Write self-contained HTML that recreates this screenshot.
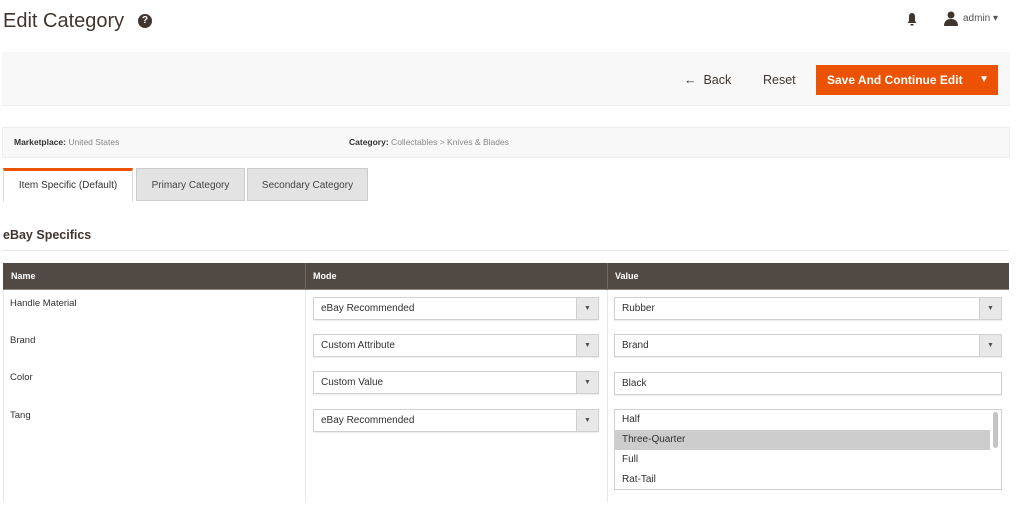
<!DOCTYPE html>
<html><head><meta charset="utf-8"><style>
*{box-sizing:border-box;margin:0;padding:0}
body{width:1024px;height:514px;overflow:hidden;background:#fff;font-family:"Liberation Sans",sans-serif;color:#303030;position:relative}
.a{position:absolute}
.sel{position:absolute;height:23px;border:1px solid #d0d0d0;background:#fff;font-size:10px;line-height:21px;padding-left:7px;color:#303030;box-shadow:0 1px 1px rgba(0,0,0,.08)}
.sel .ar{position:absolute;right:0;top:0;width:22px;height:21px;background:#e8e8e8;border-left:1px solid #d0d0d0;text-align:center;font-size:7px;color:#555}
.vl{position:absolute;top:290px;width:1px;height:212px;background:#e8e8e8}
.th{position:absolute;top:263px;height:27px;line-height:27px;color:#fff;font-weight:bold;font-size:9px;padding-left:8px}
.nm{position:absolute;left:10px;font-size:9.5px;color:#303030}
</style></head><body>
<div class="a" style="left:3px;top:10px;font-size:20px;color:#41362f">Edit Category</div>
<div class="a" style="left:138px;top:14px;width:14px;height:14px;border-radius:50%;background:#41362f;color:#fff;font-size:10px;font-weight:bold;text-align:center;line-height:14px">?</div>
<svg class="a" style="left:906px;top:12px" width="12" height="14" viewBox="0 0 12 14"><path d="M6 1C3.5 1 3 3 3 5v4L1.5 11h9L9 9V5C9 3 8.5 1 6 1z M4.5 12h3v1.5h-3z" fill="#41362f"/></svg>
<svg class="a" style="left:943px;top:11px" width="16" height="15" viewBox="0 0 16 15"><circle cx="8" cy="4" r="3.5" fill="#41362f"/><path d="M1 15c0-5 3-7 7-7s7 2 7 7z" fill="#41362f"/></svg>
<div class="a" style="left:963px;top:13px;font-size:10px;color:#555">admin &#9662;</div>

<div class="a" style="left:2px;top:52px;width:1008px;height:54px;background:#f8f8f8;border-bottom:1px solid #eee"></div>
<div class="a" style="left:684px;top:73px;font-size:12.5px;color:#41362f">&#8592;&nbsp; Back</div>
<div class="a" style="left:763px;top:73px;font-size:12.5px;color:#41362f">Reset</div>
<div class="a" style="left:816px;top:65px;width:182px;height:30px;background:#eb5202;color:#fff;font-weight:bold;font-size:12px;line-height:30px;padding-left:11px">Save And Continue Edit<span style="position:absolute;right:9px;font-size:10px">&#9660;</span></div>

<div class="a" style="left:2px;top:127px;width:1008px;height:31px;background:#f8f8f8;border:1px solid #eee;font-size:8.5px;line-height:29px;color:#888"><span style="position:absolute;left:11px"><b style="color:#333">Marketplace:</b> United States</span><span style="position:absolute;left:346px"><b style="color:#333">Category:</b> Collectables &gt; Knives &amp; Blades</span></div>

<div class="a" style="left:3px;top:168px;width:130px;height:34px;background:#fff;border-top:3px solid #eb5202;border-left:1px solid #ddd;border-right:1px solid #ddd;font-size:10px;line-height:30px;text-align:center;color:#333">Item Specific (Default)</div>
<div class="a" style="left:136px;top:168px;width:109px;height:33px;background:#e3e3e3;border:1px solid #ccc;font-size:10px;line-height:33px;text-align:center;color:#444">Primary Category</div>
<div class="a" style="left:247px;top:168px;width:121px;height:33px;background:#e3e3e3;border:1px solid #ccc;font-size:10px;line-height:33px;text-align:center;color:#444">Secondary Category</div>

<div class="a" style="left:3px;top:228px;font-size:12.5px;font-weight:bold;color:#41362f">eBay Specifics</div>
<div class="a" style="left:3px;top:250px;width:1006px;height:1px;background:#e6e6e6"></div>

<div class="a" style="left:3px;top:263px;width:1006px;height:27px;background:#514943;border-bottom:1px solid #8a837f"></div>
<div class="a" style="left:305px;top:263px;width:1px;height:27px;background:#6f6660"></div>
<div class="a" style="left:607px;top:263px;width:1px;height:27px;background:#6f6660"></div>
<div class="th" style="left:3px">Name</div><div class="th" style="left:305px">Mode</div><div class="th" style="left:607px">Value</div>
<div class="vl" style="left:3px"></div><div class="vl" style="left:305px"></div><div class="vl" style="left:607px"></div>

<div class="nm" style="top:298px">Handle Material</div>
<div class="nm" style="top:335px">Brand</div>
<div class="nm" style="top:372px">Color</div>
<div class="nm" style="top:410px">Tang</div>

<div class="sel" style="left:313px;top:297px;width:286px">eBay Recommended<div class="ar">&#9660;</div></div>
<div class="sel" style="left:614px;top:297px;width:388px">Rubber<div class="ar">&#9660;</div></div>
<div class="sel" style="left:313px;top:334px;width:286px">Custom Attribute<div class="ar">&#9660;</div></div>
<div class="sel" style="left:614px;top:334px;width:388px">Brand<div class="ar">&#9660;</div></div>
<div class="sel" style="left:313px;top:371px;width:286px">Custom Value<div class="ar">&#9660;</div></div>
<div class="sel" style="left:614px;top:372px;width:388px;line-height:22px">Black</div>
<div class="sel" style="left:313px;top:409px;width:286px">eBay Recommended<div class="ar">&#9660;</div></div>

<div class="a" style="left:614px;top:409px;width:388px;height:81px;border:1px solid #d0d0d0;font-size:10px;color:#303030">
<div style="height:20px;line-height:20px;padding-left:7px">Half</div>
<div style="height:20px;line-height:20px;padding-left:7px;background:#cdcdcd;margin-right:11px">Three-Quarter</div>
<div style="height:20px;line-height:20px;padding-left:7px">Full</div>
<div style="height:20px;line-height:20px;padding-left:7px">Rat-Tail</div>
<div style="position:absolute;right:3px;top:2px;width:5px;height:36px;border-radius:3px;background:#c4c4c4"></div>
</div>
</body></html>
